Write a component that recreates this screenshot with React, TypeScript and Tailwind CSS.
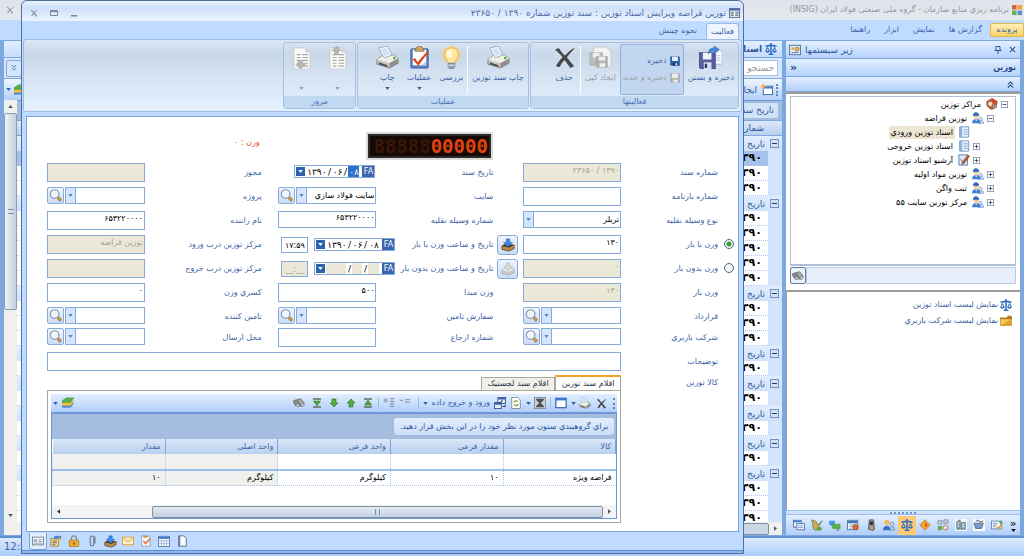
import { useState, type ReactNode } from "react"
import clsx from "clsx"

type IconProps = { className?: string; gray?: boolean }

/* ---------- Icons ---------- */

function PrinterIcon({ className = "size-6" }: IconProps) {
  return (
    <svg viewBox="0 0 24 24" className={className}>
      <path d="M3 2l9-2 5 10-9 3z" fill="#f7fbff" stroke="#8b9bb0" strokeWidth=".8" />
      <path d="M5 3l6-1.4 3.6 7-6 2z" fill="#cfe3fa" />
      <path d="M1 14l6-4 2 2.5 9-3.5 5 4v5l-9 5-13-4z" fill="#c9c8c4" stroke="#6f6f6d" strokeWidth=".8" />
      <path d="M1 14l13 3.8 9-4.8-5-3.6-9 3.1-2-2.4z" fill="#efeeea" />
      <path d="M14 18v5l9-5v-5z" fill="#8e8e8c" />
      <path d="M3 17l9 3v2l-9-3z" fill="#4a4a4a" />
      <circle cx="19" cy="12.6" r="1.4" fill="#34c02e" />
    </svg>
  )
}

function ClipboardIcon({ className = "size-6" }: IconProps) {
  return (
    <svg viewBox="0 0 24 24" className={className}>
      <rect x="3" y="3" width="18" height="20" rx="1" fill="#5f86c4" stroke="#35599c" />
      <path d="M5 4h14v16H5z" fill="#fff" />
      <path d="M14 20l5-4v4z" fill="#b9cdea" />
      <path d="M8 4c0-5 8-5 8 0l1 1.5H7z" fill="#c9a56a" stroke="#80622f" strokeWidth=".7" />
      <path d="M5 14l2.4-1.5L10 17 20 5.5l1.5 1L10.600 20.500z" fill="#e2440f" />
    </svg>
  )
}

function BulbIcon({ className = "size-6" }: IconProps) {
  return (
    <svg viewBox="0 0 24 24" className={className}>
      <ellipse cx="12" cy="9" rx="9.500" ry="9" fill="#ffc95a" opacity=".7" />
      <path d="M12 2c-5 0-7 3.500-7 7 0 4 3.500 5 3.500 9h7c0-4 3.500-5 3.500-9 0-3.500-2-7-7-7z" fill="#ffe9a6" stroke="#f0a83a" strokeWidth=".8" />
      <ellipse cx="10" cy="8" rx="3" ry="4" fill="#fff8de" />
      <path d="M8.500 18h7v3.500L13.500 24h-3l-2-2.500z" fill="#93a5bd" stroke="#61738d" strokeWidth=".7" />
      <path d="M8.500 20h7" stroke="#dfe8f4" />
    </svg>
  )
}

function FloppyIcon({ className = "size-3", gray }: IconProps) {
  return (
    <svg viewBox="0 0 24 24" className={className}>
      <path d="M1 2h21l1 1v20H3l-2-2z" fill={gray ? "#b3b3b3" : "#2b5fb5"} stroke={gray ? "#999" : "#173c80"} />
      <path d="M5 2h14v10H5z" fill={gray ? "#eee" : "#e7f1ff"} />
      <path d="M7 16h11v7H7z" fill={gray ? "#ddd" : "#16305f"} />
      <path d="M13 17.500h4V22h-4z" fill="#fff" />
    </svg>
  )
}

function SaveCloseIcon({ className = "size-6" }: IconProps) {
  return (
    <svg viewBox="0 0 24 24" className={className}>
      <path d="M12 3h9l3 3v13H12z" fill="#f7faff" stroke="#8fa9cd" strokeWidth=".8" />
      <path d="M14 10h8M14 12.500h8M14 15h8" stroke="#b7c9e4" />
      <path d="M0 7h16l1 1v16H2l-2-2z" fill="#5a5e9f" stroke="#3a3c78" strokeWidth=".8" />
      <path d="M4 7h9v7H4z" fill="#f0f2fb" />
      <path d="M5 17h8v7H5z" fill="#d9dcef" />
      <path d="M6 18.500h2.500V23H6z" fill="#34366e" />
      <path d="M10 8c0-5 3-6 6-6V0l5 4-5 4V5.500c-3 0-4 .5-6 2.500z" fill="#3f8be0" stroke="#1f5fae" strokeWidth=".6" />
    </svg>
  )
}

function CopyIcon({ className = "size-6" }: IconProps) {
  return (
    <svg viewBox="0 0 24 24" className={className}>
      <path d="M5 1h13l5 5v16H5z" fill="#f3f3f1" stroke="#c2c2c0" strokeWidth=".8" />
      <path d="M1 7h13v13H1z" fill="#bdbdbb" stroke="#a0a09e" strokeWidth=".7" />
      <path d="M4 7h7v5H4z" fill="#efefed" />
      <path d="M8 11h11v11H8z" fill="#b3b3b1" stroke="#999" strokeWidth=".7" />
      <path d="M10 11h7v4h-7zM11 18h6v4h-6z" fill="#eee" />
    </svg>
  )
}

function CrossIcon({ className = "size-6" }: IconProps) {
  return (
    <svg viewBox="0 0 24 24" className={className}>
      <path d="M2 4l4-2c2 3 4 6 6.500 8C16 6 19 3 23 2c-3 3-6 6-8.500 10 2.500 3 4.500 5.500 7.500 9l-4 2c-2-3.500-4-6-6-8.500-2.500 2.500-4 5-5 7.500l-4-1c1.500-3 4-6 7-9.500C7.500 9 5 6 2 4z" fill="currentColor" />
    </svg>
  )
}

function PageListIcon({ className = "size-6", up }: { className?: string; up?: boolean }) {
  return (
    <svg viewBox="0 0 24 24" className={className}>
      <path d="M4 2h12l5 5v17H4z" fill="#fafafa" stroke="#bdbdbd" strokeWidth=".8" />
      <path d="M16 2l5 5h-5z" fill="#d6d6d6" />
      <path d="M7 9h4M13 9h6M7 12h4M13 12h6M7 15h4M13 15h6M7 18h4M13 18h6M7 21h4M13 21h6" stroke="#a9a9a9" strokeWidth="1.300" />
      <path d={up ? "M9 9V5H6l5-5 5 5h-3v4z" : "M9 15v4H6l5 5 5-5h-3v-4z"} fill="#b9b9b9" stroke="#999" strokeWidth=".6" />
    </svg>
  )
}

function ScalesIcon({ className = "size-3" }: IconProps) {
  return (
    <svg viewBox="0 0 24 24" className={className} fill="#2f6cc0">
      <path d="M10.500 0h3v3l9.500 2v3l-9.500-1.500V20l4.500 4H6l4.500-4V6.500L1 8V5l9.500-2z" />
      <path d="M5 7l4.500 9c-1 4.500-8 4.500-9 0zm0 4l-2 5h4zM19 7l4.500 9c-1 4.500-8 4.500-9 0zm0 4l-2 5h4z" fillRule="evenodd" />
    </svg>
  )
}

function FormIcon({ className = "size-3" }: IconProps) {
  return (
    <svg viewBox="0 0 14 12" className={className}>
      <rect x=".5" y=".5" width="13" height="11" fill="#eef4fc" stroke="#3e4d66" />
      <path d="M0 0h14v3H0z" fill="#4f6fa5" />
      <path d="M2 5h4M2 7h4M2 9h4M8 5h4M8 7h4M8 9h4" stroke="#3d4c60" />
    </svg>
  )
}

function CalendarGridIcon({ className = "size-3" }: IconProps) {
  return (
    <svg viewBox="0 0 14 14" className={className}>
      <rect x=".5" y="1.500" width="13" height="12" fill="#fff" stroke="#5676a8" />
      <path d="M1 2h12v2.500H1z" fill="#3f78cf" />
      <path d="M1 7h12M1 10h12M4 5v8M7 5v8M10 5v8" stroke="#9db4d6" />
    </svg>
  )
}

function MagnifierIcon({ className = "size-3" }: IconProps) {
  return (
    <svg viewBox="0 0 14 14" className={className}>
      <path d="M8.500 9.500l2-1.500 3 3.500-2 2z" fill="#d79a35" stroke="#7d6130" strokeWidth=".7" />
      <circle cx="6" cy="5.500" r="4.700" fill="#eef5fd" stroke="#8e99a8" strokeWidth="1.300" />
      <path d="M3.500 5c.3-1.500 1.500-2.300 3-2.200" stroke="#fff" fill="none" />
    </svg>
  )
}

function InboxIcon({ className = "size-4", gray }: IconProps) {
  return (
    <svg viewBox="0 0 16 16" className={className}>
      <path d="M1 9l4-2 10 1v4l-6 3-8-2z" fill={gray ? "#c9c9c9" : "#b98a45"} stroke={gray ? "#a9a9a9" : "#4b3a20"} strokeWidth=".8" />
      <path d="M1 9l4-2 10 1-6 3z" fill={gray ? "#ededed" : "#4a4032"} />
      <path d="M6 1h4v4h3L8 10 3 5h3z" fill={gray ? "#d9d9d9" : "#3c8ae8"} stroke={gray ? "#b0b0b0" : "#1f5cae"} strokeWidth=".6" />
    </svg>
  )
}

function PeopleIcon({ className = "size-3" }: IconProps) {
  return (
    <svg viewBox="0 0 14 14" className={className}>
      <circle cx="10" cy="8" r="2" fill="#d8e6f7" stroke="#6b8fc2" strokeWidth=".7" />
      <path d="M7.500 14c0-5 6.500-5 6.500-1z" fill="#c5daf3" stroke="#6b8fc2" strokeWidth=".7" />
      <path d="M0 13C0 6 10 6 10 13z" fill="#3c7fdc" />
      <circle cx="5" cy="5" r="2.800" fill="#f3c889" />
      <path d="M1 4.500c0-5.500 7-5.500 7.500 0z" fill="#2a66c6" />
      <path d="M3.500 8.500L5 11l1.500-2.500z" fill="#ffe27a" />
    </svg>
  )
}

function BookIcon({ className = "size-3" }: IconProps) {
  return (
    <svg viewBox="0 0 14 14" className={className}>
      <path d="M2 1h10.500v12H2z" fill="#f2f7fd" stroke="#5f8bc6" />
      <path d="M2 1h3v12H2z" fill="#8fb2e0" />
      <path d="M6.500 4h5M6.500 6h5M6.500 8h5M6.500 10h5" stroke="#8fb0dc" />
    </svg>
  )
}

function ArchiveIcon({ className = "size-3" }: IconProps) {
  return (
    <svg viewBox="0 0 14 14" className={className}>
      <path d="M1 1h10v12H1z" fill="#d8e8fa" stroke="#4674b4" />
      <path d="M3 6l3 4" stroke="#35599c" />
      <path d="M5 10L11.500 1l2 1.500L7 11l-2.500 1z" fill="#e2581c" stroke="#6a2a10" strokeWidth=".6" />
    </svg>
  )
}

function RootIcon({ className = "size-3" }: IconProps) {
  return (
    <svg viewBox="0 0 14 14" className={className}>
      <path d="M1 4l6-3.500L13 4l-1 7-6 2.500L1 9z" fill="#c4622d" stroke="#63301a" strokeWidth=".7" />
      <path d="M7 .5L13 4 8 6.500z" fill="#e33b1b" />
      <circle cx="5" cy="7" r="2.500" fill="#f2ddc0" />
      <path d="M8 8h4v3l-3 1.500z" fill="#8b98a8" />
    </svg>
  )
}

function StackIcon({ className = "size-3" }: IconProps) {
  return (
    <svg viewBox="0 0 14 12" className={className}>
      <path d="M0 9l4-3h10l-4 5.500H0z" fill="#4f8fe0" />
      <path d="M0 6.500L4 4h10l-4 5H0z" fill="#f6c33b" stroke="#c98d17" strokeWidth=".4" />
      <path d="M0 3.500L5 0h9l-4 5.500H0z" fill="#56b04a" stroke="#3a8131" strokeWidth=".4" />
    </svg>
  )
}

function BinocularsIcon({ className = "size-3" }: IconProps) {
  return (
    <svg viewBox="0 0 14 12" className={className}>
      <path d="M0 4l4-2 5 5-2 3-4-1z" fill="#8c8c8c" stroke="#4f4f4f" strokeWidth=".7" />
      <path d="M5 2l4-1 4 5-1 3-3 1z" fill="#a9a9a9" stroke="#4f4f4f" strokeWidth=".7" />
      <circle cx="5.500" cy="8.500" r="1.800" fill="#c9dcf2" stroke="#555" strokeWidth=".6" />
      <circle cx="11.200" cy="8" r="1.800" fill="#c9dcf2" stroke="#555" strokeWidth=".6" />
    </svg>
  )
}

function FolderIcon({ className = "size-3" }: IconProps) {
  return (
    <svg viewBox="0 0 14 12" className={className}>
      <path d="M0 2h8l1-2h4l1 2v9.500H0z" fill="#b47b1d" />
      <path d="M.5 4h13v7H.5z" fill="#f6c95a" />
      <path d="M.5 11L13.500 4v7z" fill="#e2a02c" />
    </svg>
  )
}

function ToolArrowIcon({ up, bar, className = "size-2.5" }: { up?: boolean; bar?: boolean; className?: string }) {
  return (
    <svg viewBox="0 0 10 10" className={className}>
      {bar && <path d="M1 1h8M1 9h8" stroke="#5d6b5e" strokeWidth="1.300" />}
      {bar ? (
        <path d={up ? "M5 2l3.500 5h-7z" : "M5 8L1.500 3h7z"} fill="#4ea63c" stroke="#2f6b26" strokeWidth=".5" />
      ) : (
        <path d={up ? "M5 1l4 4H7v4H3V5H1z" : "M5 9L1 5h2V1h4v4h2z"} fill="#52ad3e" stroke="#2f6b26" strokeWidth=".6" />
      )}
    </svg>
  )
}

function Glyph({ name, className = "size-3" }: { name: string; className?: string }) {
  return (
    <svg viewBox="0 0 14 14" className={className}>
      {name === "windows" && (
        <>
          <rect x=".5" y="1.500" width="9" height="8" fill="#e9f2fd" stroke="#42699f" />
          <path d="M1 2h8v2H1z" fill="#4b82ce" />
          <rect x="4.500" y="5.500" width="9" height="7" fill="#fff" stroke="#42699f" />
          <path d="M6 8h6M6 10h6" stroke="#6a92c9" />
        </>
      )}
      {name === "brush" && (
        <>
          <path d="M1 1l5 2 2 4 5-5-4 7-3 4-3-1z" fill="#d7a861" stroke="#4c7b3c" strokeWidth=".8" />
          <path d="M8 9l5 1-1 3-5 1z" fill="#58a848" />
        </>
      )}
      {name === "chat" && (
        <>
          <path d="M0 2h7v5H4L2 9V7H0z" fill="#4b9ae6" />
          <path d="M4 6h9v5h-2v3l-3-3H4z" fill="#57b347" stroke="#3b8230" strokeWidth=".5" />
        </>
      )}
      {name === "schedule" && (
        <>
          <rect x=".5" y="1.500" width="12" height="11" fill="#f4f8fd" stroke="#50719f" />
          <path d="M1 2h11v3H1z" fill="#4476bd" />
          <path d="M3 7h7M3 9h5M3 11h3" stroke="#8ba2c2" />
          <circle cx="10" cy="9.500" r="3.200" fill="#e06b35" stroke="#8d3a17" strokeWidth=".6" />
        </>
      )}
      {name === "safe" && (
        <>
          <path d="M5 1h5l1 11-2 1.500-5-1.500z" fill="#8c8c8c" stroke="#444" strokeWidth=".8" />
          <circle cx="7.500" cy="5" r="2" fill="#2e2e2e" />
          <path d="M6 9h3v3H6z" fill="#d9a640" />
        </>
      )}
      {name === "users" && (
        <>
          <circle cx="4.500" cy="4" r="3" fill="#f0bd55" />
          <path d="M0 13c0-7 9-7 9 0z" fill="#356fc9" />
          <circle cx="10.500" cy="6" r="2.300" fill="#cfd9e8" stroke="#5c7396" strokeWidth=".7" />
          <path d="M8 13c0-5 6-5 6 0z" fill="#b5c6de" stroke="#5c7396" strokeWidth=".6" />
        </>
      )}
      {name === "diamond" && (
        <>
          <path d="M7 1l6 6-6 6-6-6z" fill="#f2a533" stroke="#c06a14" strokeWidth=".8" />
          <path d="M7 4l3 3-3 3z" fill="#d9482b" />
        </>
      )}
      {name === "blocks" && (
        <>
          <path d="M1 2h5v4H1zM8 1h5v4H8z" fill="#c8d1dc" stroke="#66758a" strokeWidth=".7" />
          <path d="M1 8h5v5H1z" fill="#5fb04e" />
          <circle cx="10" cy="10" r="2.700" fill="#e3e8ef" stroke="#c05a3c" strokeWidth=".9" />
        </>
      )}
      {name === "building" && (
        <>
          <path d="M0 0h14v14H0z" fill="#f8fafc" />
          <path d="M2 3l4-2v11H2zM7 4h5v8H7z" fill="#8aa5c8" stroke="#476d53" strokeWidth=".8" />
          <path d="M3 5h2M3 8h2M8 6h3M8 9h3" stroke="#fff" />
        </>
      )}
      {name === "cart" && (
        <>
          <path d="M0 0h14v14H0z" fill="#f8fafc" />
          <path d="M1 5h11l-2 6H3zM3 3l3-2 2 3 4-2" fill="#7e9cc8" stroke="#3d5f93" strokeWidth=".9" />
          <path d="M9 2l3 2-3 2z" fill="#e0a337" />
        </>
      )}
      {name === "report" && (
        <>
          <rect x=".5" y="2.500" width="12" height="9" fill="#fff" stroke="#5b7fb3" />
          <path d="M2 5h6M2 7h5M2 9h4" stroke="#6a92c9" />
          <path d="M7 9l2 2 4-6" stroke="#e09a1d" strokeWidth="1.800" fill="none" />
          <circle cx="11.500" cy="4" r="1.800" fill="#58a848" />
        </>
      )}
      {name === "card" && (
        <>
          <rect x=".5" y="2.500" width="13" height="9" fill="#f3f6fa" stroke="#6d7b8e" />
          <path d="M2 5h4v3H2z" fill="#9aabc2" />
          <path d="M7.500 5.500h4M7.500 7.500h4M2 9.500h10" stroke="#8795a9" />
        </>
      )}
      {name === "props" && (
        <>
          <path d="M1 4h9v9H1z" fill="#f0d79c" stroke="#8a6a2c" strokeWidth=".8" />
          <path d="M5 1h8v4H5z" fill="#4d83cf" />
          <path d="M10 2l3 3-4 2z" fill="#f1ab2b" />
          <path d="M3 7h5M3 9h5M3 11h3" stroke="#6d5a33" />
        </>
      )}
      {name === "lock" && (
        <>
          <path d="M4 7V4c0-4 6-4 6 0v3" fill="none" stroke="#8d8d8d" strokeWidth="1.500" />
          <rect x="1.500" y="6" width="11" height="7.500" rx="1" fill="#f1ab2b" stroke="#a86b12" strokeWidth=".8" />
          <path d="M7 8.500v3" stroke="#6b420a" strokeWidth="1.400" />
        </>
      )}
      {name === "clip" && (
        <path d="M9 3v7.500c0 3-4 3-4 0V3.500c0-3 5.500-3 5.500 0V10" fill="none" stroke="#71839c" strokeWidth="1.400" />
      )}
      {name === "mail" && (
        <>
          <rect x=".5" y="2.500" width="13" height="9" fill="#fbeec5" stroke="#d79b37" />
          <path d="M1 3l6 5 6-5" fill="none" stroke="#d79b37" />
        </>
      )}
      {name === "check" && (
        <>
          <path d="M2 1h9l1 12H2z" fill="#f5f7fb" stroke="#7a8ca8" strokeWidth=".8" />
          <path d="M4 1h5v2H4z" fill="#c58b3b" />
          <path d="M4 7l2.500 3L12 4" fill="none" stroke="#e06a25" strokeWidth="1.600" />
        </>
      )}
      {name === "page" && (
        <>
          <path d="M3 1h6l3 3v9H3z" fill="#fbfcfe" stroke="#4e6384" />
          <path d="M3 1h2v12H3z" fill="#6d84aa" />
        </>
      )}
      {name === "window" && (
        <>
          <rect x="1" y="1.500" width="12" height="11" fill="#fff" stroke="#2d64b5" strokeWidth="1.400" />
          <path d="M1 1.500h12V4H1z" fill="#3a79d2" />
        </>
      )}
      {name === "sum" && (
        <>
          <rect x=".5" y=".5" width="13" height="13" fill="#cdd0d4" stroke="#808791" />
          <path d="M2.500 2h9v1.500L8 7l3.500 3.500V12h-9v-1.500L6 7 2.500 3.500z" fill="#4a525c" />
        </>
      )}
      {name === "refresh" && (
        <>
          <path d="M2 .5h7l3 3v10H2z" fill="#fdfdfb" stroke="#7b8188" />
          <path d="M4.500 6.500C5 4 8 4 9 5.500M9.500 8c-.5 2.500-3.500 2.500-4.500 1" fill="none" stroke="#6da43a" strokeWidth="1.500" />
        </>
      )}
      {name === "export" && (
        <>
          <rect x="4.500" y=".5" width="9" height="7" fill="#e6edf8" stroke="#33527f" />
          <path d="M5 1h8v2H5z" fill="#3e66a6" />
          <rect x=".5" y="6.500" width="8" height="7" fill="#e6edf8" stroke="#33527f" />
          <path d="M1 7h7v2H1z" fill="#3e66a6" />
          <path d="M6 8l4-4M10 11h3V9" stroke="#27406a" strokeWidth="1.200" fill="none" />
        </>
      )}
      {name === "tree" && (
        <>
          <circle cx="3" cy="4" r="2.500" fill="#a3abb8" />
          <path d="M8 2h5M8 5h5M8 8h5M8 11h5" stroke="#8a94a3" strokeWidth="1.400" />
        </>
      )}
      {name === "rows" && <path d="M1 4h4M7 3h6M7 6h6" stroke="#97a1af" strokeWidth="1.400" />}
      {name === "new" && (
        <>
          <rect x="3.500" y="3.500" width="10" height="9" fill="#fff" stroke="#3d68a6" />
          <path d="M4 4h9v2H4z" fill="#4b82ce" />
          <path d="M3.500 0l1 2.500L7 3.500 4.500 4.500l-1 2.500-1-2.500L0 3.500l2.500-1z" fill="#f5b22d" />
        </>
      )}
      {name === "subsys" && (
        <>
          <rect x=".5" y="1.500" width="13" height="11" fill="#dfeaf8" stroke="#49668f" />
          <path d="M3 4h3v3H3z" fill="#e7a733" />
          <circle cx="9.500" cy="6" r="2.300" fill="#e9c25b" stroke="#72592a" strokeWidth=".7" />
          <path d="M3 10h8" stroke="#49668f" />
        </>
      )}
    </svg>
  )
}

function Caret({ className = "text-[#2f5ea8]" }: { className?: string }) {
  return (
    <svg viewBox="0 0 6 4" className={clsx("h-[3px] w-[5px] shrink-0", className)}>
      <path d="M0 0h6L3 4z" fill="currentColor" />
    </svg>
  )
}

/* ---------- Form controls ---------- */

const frame = "border border-[#86aadb] bg-white"

function Field({ id, value = "", disabled, short }: { id: string; value?: string; disabled?: boolean; short?: boolean }) {
  return (
    <input
      id={id}
      defaultValue={value}
      disabled={disabled}
      className={clsx(
        "w-full border border-[#86aadb] px-px pb-1 outline-none",
        short ? "h-[17px]" : "h-[19px]",
        disabled ? "bg-[#ebe8d8] text-[#a5a394]" : "bg-white text-black",
      )}
    />
  )
}

function Combo({ id, value = "", lookup = true }: { id: string; value?: string; lookup?: boolean }) {
  return (
    <div className="flex h-[17px] w-full gap-px">
      <div className={clsx("flex min-w-0 flex-1", frame)}>
        <select id={id} defaultValue={value} className="min-w-0 flex-1 appearance-none px-px text-black outline-none">
          <option value={value}>{value}</option>
        </select>
        <span className="flex w-[10px] shrink-0 items-center justify-center border-r border-[#86aadb] bg-[#d5e5fb]">
          <Caret className="text-[#5d87c4]" />
        </span>
      </div>
      {lookup && (
        <button
          type="button"
          aria-label="جستجو"
          className="flex w-[17px] shrink-0 items-center justify-center rounded-[2px] border border-[#86aadb] bg-linear-to-b from-[#f2f7fe] to-[#c9dcf6]"
        >
          <MagnifierIcon className="size-[13px]" />
        </button>
      )}
    </div>
  )
}

function DateField({ id, parts, disabled, active }: { id: string; parts: string[]; disabled?: boolean; active?: boolean }) {
  const cell = disabled ? "bg-[#ebe8d8]" : "bg-white"
  return (
    <div dir="ltr" className={clsx("flex h-[13px] w-[81px] shrink-0 items-stretch text-[9px]", frame)}>
      <button type="button" disabled={disabled} aria-label="تقویم" className="m-px flex w-[9px] items-center justify-center bg-[#2d62ad]">
        <Caret className="text-white" />
      </button>
      <input id={id} defaultValue={parts[0]} disabled={disabled} className={clsx("w-[20px] text-right outline-none", cell)} />
      <span className="w-[6px] text-center text-black">/</span>
      <input aria-label="ماه" defaultValue={parts[1]} disabled={disabled} className={clsx("w-[10px] text-right outline-none", cell)} />
      <span className="w-[6px] text-center text-black">/</span>
      <input
        aria-label="روز"
        defaultValue={parts[2]}
        disabled={disabled}
        className={clsx("w-[11px] text-center outline-none", active ? "bg-[#2f6fd0] text-white" : cell)}
      />
      <span className="ml-auto flex w-[12px] items-center justify-center bg-[#3a66ad] text-[8px] text-white">FA</span>
    </div>
  )
}

function FormLabel({ htmlFor, children }: { htmlFor: string; children: ReactNode }) {
  return (
    <label htmlFor={htmlFor} className="flex h-[19px] items-center whitespace-nowrap text-[#3c64a8]">
      {children}
    </label>
  )
}

/* ---------- Back window ---------- */

const menu = ["گزارش ها", "نمایش", "ابزار", "راهنما"]

// Number of documents listed below every date group
const groups = [3, 5, 3, 1, 1, 1, 1, 3]

const tree = [
  { label: "مراکز توزین", level: 0, icon: <RootIcon />, sign: "-" },
  { label: "توزین قراضه", level: 1, icon: <PeopleIcon />, sign: "-" },
  { label: "اسناد توزین ورودي", level: 2, icon: <BookIcon />, sign: "", selected: true },
  { label: "اسناد توزین خروجی", level: 2, icon: <BookIcon />, sign: "+" },
  { label: "آرشیو اسناد توزین", level: 2, icon: <ArchiveIcon />, sign: "+" },
  { label: "توزین مواد اولیه", level: 1, icon: <PeopleIcon />, sign: "+" },
  { label: "ثبت واگن", level: 1, icon: <PeopleIcon />, sign: "+" },
  { label: "مرکز توزین سایت ۵۵", level: 1, icon: <PeopleIcon />, sign: "+" },
]

function Expander({ sign, large }: { sign: string; large?: boolean }) {
  return (
    <svg viewBox="0 0 9 9" className={large ? "size-[9px] shrink-0" : "size-[7px] shrink-0"}>
      <rect x=".5" y=".5" width="8" height="8" fill={large ? "#cfe0f7" : "#fff"} stroke={large ? "#6f93c8" : "#7d8fa9"} />
      <path d={sign === "+" ? "M2 4.500h5M4.500 2v5" : "M2 4.500h5"} stroke="#24395c" />
    </svg>
  )
}

function TopBars() {
  return (
    <header>
      <div className="flex h-[20px] items-center gap-[3px] bg-linear-to-b from-[#dfe3ea] to-[#e6e9ee] pr-px pl-1.5 text-[#8e97a4]">
        <svg viewBox="0 0 12 12" className="size-[11px] shrink-0">
          <path d="M0 0h5v5H0z" fill="#d9643c" />
          <path d="M6 0h5v5H6z" fill="#f0a23a" />
          <path d="M0 6h5v5H0z" fill="#6bb04e" />
          <path d="M6 6h5v5H6z" fill="#5b8ad6" />
        </svg>
        <h1 className="whitespace-nowrap">برنامه ریزي منابع سازمان - گروه ملی صنعتی فولاد ایران (INSIG)</h1>
        <button type="button" aria-label="بستن" className="mr-auto">
          <CrossIcon className="size-2" />
        </button>
      </div>
      <nav className="flex h-[20px] items-center bg-[#bfdbff] text-[#3c64a8]">
        <button type="button" className="h-[14px] w-[34px] rounded-t-[2px] border border-[#e0b450] bg-linear-to-b from-[#fff0b8] to-[#fbd261]">
          پرونده
        </button>
        <div className="mr-[8px] flex gap-[14px]">
          {menu.map((item) => (
            <button key={item} type="button" className="whitespace-nowrap">
              {item}
            </button>
          ))}
        </div>
      </nav>
    </header>
  )
}

function SidePanel() {
  return (
    <aside className="flex w-[234px] shrink-0 flex-col bg-white">
      <div className="flex h-[17px] shrink-0 items-center bg-linear-to-b from-[#e3efff] to-[#b5d2fb] px-[3px] text-[9px] text-[#2f5797]">
        <button type="button" aria-label="بستن" className="flex w-[9px] justify-center">
          <svg viewBox="0 0 8 8" className="size-[7px]">
            <path d="M1 1l6 6M7 1L1 7" stroke="currentColor" strokeWidth="1.300" />
          </svg>
        </button>
        <button type="button" aria-label="سنجاق" className="mr-[6px] flex w-[9px] justify-center">
          <svg viewBox="0 0 8 8" className="size-[8px]" fill="none" stroke="currentColor">
            <path d="M2 .5h4v4H2zM.5 4.500h7M4 5v3" />
          </svg>
        </button>
        <h2 className="mr-auto ml-[4px]">زیر سیستمها</h2>
        <Glyph name="subsys" />
      </div>
      <div className="flex h-[18px] shrink-0 items-center justify-between border-t border-[#7ea6de] bg-linear-to-b from-[#e3efff] to-[#b5d2fb] px-[4px] font-bold text-[#1f4384]">
        <span>توزین</span>
        <span className="text-[11px]">«</span>
      </div>
      <div className="flex h-[16px] shrink-0 items-center border-y border-[#7ea6de] bg-linear-to-b from-[#e3efff] to-[#b5d2fb] px-[6px] text-[#1f4384]">
        <svg viewBox="0 0 8 8" className="size-[7px]" fill="none" stroke="currentColor" strokeWidth="1.200">
          <path d="M1 4l3-3 3 3M1 7.500l3-3 3 3" />
        </svg>
      </div>
      <div className="flex h-[194px] shrink-0 flex-col border-t-2 border-[#9c9c98] pt-[2px] pr-[4px] pl-[4px]">
        <ul className="flex-1 border border-b-2 border-[#aebfd6] pr-[7px] text-black">
          {tree.map((node) => (
            <li
              key={node.label}
              className={clsx("flex h-[14px] items-center gap-[3px]", node.level === 1 && "pr-[14px]", node.level === 2 && "pr-[28px]")}
            >
              {node.sign ? <Expander sign={node.sign} /> : <span className="w-[7px]" />}
              {node.icon}
              <span className={clsx("px-[2px] leading-[13px] whitespace-nowrap", node.selected && "bg-[#ebe5d2]")}>{node.label}</span>
            </li>
          ))}
        </ul>
        <div className="flex h-[20px] items-center pb-px" dir="ltr">
          <button type="button" aria-label="یافتن" className="flex h-[17px] w-[16px] items-center justify-center rounded-[2px] border border-[#5f7ea9] bg-[#edf2f9]">
            <BinocularsIcon />
          </button>
          <div className="h-[17px] flex-1 border border-[#b7cbe6] bg-[#e9f0fb]" />
        </div>
      </div>
      <div className="h-[4px] shrink-0" />
      <div className="min-h-0 flex-1 border-t-2 border-l border-[#9c9c98] px-[8px] pt-[5px]">
        {["نمایش لیست اسناد توزین", "نمایش لیست شرکت باربري"].map((text, i) => (
          <a key={text} href="#" className="flex h-[16px] items-center gap-[2px] whitespace-nowrap text-[#3c64a8]">
            {i === 0 ? <ScalesIcon /> : <FolderIcon />}
            {text}
          </a>
        ))}
      </div>
      <div className="flex h-[5px] shrink-0 items-center justify-center border-y border-[#9dbfee] bg-[#cfe1fb]">
        <span className="h-[2px] w-[26px] border-t-2 border-dotted border-[#6d94cc]" />
      </div>
      <div className="flex h-[20px] shrink-0 items-center bg-linear-to-b from-[#e3efff] to-[#b0cef9]">
        <button type="button" aria-label="بیشتر" dir="ltr" className="flex w-[14px] flex-col items-center text-[11px] leading-[10px] text-black">
          »
          <Caret className="text-black" />
        </button>
        {["report", "cart", "building", "blocks", "diamond", "scales", "users", "safe", "schedule", "chat", "brush", "windows"].map((name) => (
          <button
            key={name}
            type="button"
            aria-label={name}
            className={clsx("flex h-[19px] w-[18px] items-center justify-center", name === "scales" && "bg-[#ffca75]")}
          >
            {name === "scales" ? <ScalesIcon /> : <Glyph name={name} />}
          </button>
        ))}
      </div>
    </aside>
  )
}

function DocumentList() {
  return (
    <section className="flex min-w-0 flex-1 flex-col bg-white text-[9px]">
      <div className="flex h-[16px] shrink-0 items-center gap-[3px] bg-linear-to-b from-[#e3efff] to-[#c5dcfb] pr-[5px] font-bold text-[#2f5797]">
        <ScalesIcon />
        اسناد توزین
      </div>
      <div className="flex h-[22px] shrink-0 items-center gap-1 border-y border-[#7ea6de] bg-[#d6e6fc] pr-[4px] pl-[2px]">
        <input aria-label="جستجو" placeholder="جستجو ..." className="h-[16px] flex-1 border border-[#a9c2e3] bg-white px-[3px] outline-none placeholder:text-[#9a9a9a]" />
        <button type="button" aria-label="نمایش بیشتر" className="flex h-[17px] w-[16px] items-center justify-center rounded-[2px] border border-[#86aadb] text-[#2f5ea8]">
          <svg viewBox="0 0 8 8" className="size-[6px]" fill="none" stroke="currentColor">
            <path d="M1 0l3 3 3-3M1 4l3 3 3-3" />
          </svg>
        </button>
      </div>
      <div className="flex h-[21px] shrink-0 items-center gap-[3px] bg-linear-to-b from-[#f0f6ff] to-[#b3d0f8] pr-[4px] pl-[2px] text-[#2f5797]">
        <span className="h-[12px] border-l-2 border-dotted border-[#5c86c4]" />
        <Glyph name="new" className="size-[13px]" />
        <span>ایجاد</span>
        <span className="mr-auto">
          <StackIcon />
        </span>
        <Caret />
      </div>
      <div className="flex min-h-0 flex-1">
        <div className="flex min-w-0 flex-1 flex-col">
          <div className="flex h-[20px] shrink-0 items-center border-t border-[#6a97d8] bg-[#a4bddf] pr-[4px]">
            <span className="h-[15px] rounded-[2px] bg-[#d3e3f8] px-[4px] leading-[15px] text-[#2f5797]">تاریخ سند</span>
          </div>
          <div className="h-[16px] shrink-0 border-y border-[#7ea6de] bg-linear-to-b from-[#dbe8f8] to-[#b9d0ee] pr-[18px] leading-[14px] text-[#2f5797]">شماره</div>
          <div className="min-h-0 flex-1 overflow-hidden bg-[#d3e4fc]">
            {groups.map((count, g) => (
              <div key={g}>
                <div className="flex h-[15px] items-center gap-[5px] bg-linear-to-b from-[#e2eefe] to-[#cfe1fb] pr-[3px] text-[#2f5797]">
                  <Expander sign="-" large />
                  تاریخ سند
                </div>
                {Array.from({ length: count }, (_, i) => (
                  <div
                    key={i}
                    className={clsx(
                      "mr-[14px] h-[15px] border-b border-dotted border-[#a9c6ee] pr-[6px] text-[11px] leading-[14px] font-bold text-black",
                      g === 0 && i === 0 ? "bg-[#a6c2ea]" : "bg-white",
                    )}
                  >
                    ۱۳۹۰
                  </div>
                ))}
              </div>
            ))}
          </div>
        </div>
        <div className="flex w-[13px] shrink-0 flex-col bg-[#f0f0ee]">
          <span className="flex h-[13px] items-center justify-center">
            <Caret className="rotate-180 text-[#44556f]" />
          </span>
          <span className="flex h-[197px] items-center justify-center rounded-[2px] border border-[#8d9ab0] bg-linear-to-l from-[#c3cedd] to-[#eef2f7]">
            <span className="h-[5px] w-[6px] border-y border-[#7f8fa9]" />
          </span>
          <span className="mt-auto flex h-[13px] items-center justify-center">
            <Caret className="text-[#44556f]" />
          </span>
        </div>
      </div>
      <div className="flex h-[13px] shrink-0 items-center bg-[#f0f0ee]">
        <span className="flex w-[13px] justify-center">
          <Caret className="-rotate-90 text-[#44556f]" />
        </span>
        <span className="h-[12px] w-1/2 rounded-[2px] border border-[#7f8fa9] bg-[#ccd7e5]" />
      </div>
    </section>
  )
}

/* ---------- Dialog ---------- */

function BigButton({ icon, label, muted, caret, onClick }: { icon: ReactNode; label?: string; muted?: boolean; caret?: boolean; onClick?: () => void }) {
  return (
    <button
      type="button"
      disabled={muted}
      onClick={onClick}
      className={clsx("flex h-full flex-col items-center px-[4px] pt-[3px] whitespace-nowrap", muted ? "text-[#9a9fa8]" : "text-[#3c64a8]")}
    >
      {icon}
      <span className="mt-[2px] h-[13px] leading-[13px]">{label}</span>
      {caret && <Caret className={clsx("mt-[3px]", muted ? "text-[#9a9fa8]" : "text-[#2f5ea8]")} />}
    </button>
  )
}

function RibbonGroup({ title, className, children }: { title: string; className: string; children: ReactNode }) {
  return (
    <div className={clsx("flex flex-col overflow-hidden rounded-[3px] border border-[#a5c0e2]", className)}>
      <div className="flex min-h-0 flex-1">{children}</div>
      <div className="h-[12px] bg-[#c1d8f1] text-center leading-[12px] text-[#4a72b2]">{title}</div>
    </div>
  )
}

const Divider = () => <span className="my-[3px] border-l border-white" />

function Ribbon() {
  return (
    <div className="mx-px flex h-[73px] shrink-0 gap-px rounded-[3px] border border-[#9dbce4] bg-linear-to-b from-[#dbe6f3] via-[#c9d9ea] via-20% to-[#e6f1ff] p-[2px]">
      <RibbonGroup title="فعالیتها" className="w-[209px]">
        <BigButton icon={<SaveCloseIcon className="size-[23px]" />} label="ذخیره و بستن" />
        <div className="my-px flex w-[64px] flex-col justify-center gap-[2px] rounded-[2px] border border-[#93b2dd] bg-[#c2d6ef] px-[3px]">
          <button type="button" className="flex h-[15px] items-center gap-[3px] whitespace-nowrap text-[#3c64a8]">
            <FloppyIcon className="size-[10px] shrink-0" />
            ذخیره
          </button>
          <button type="button" disabled className="flex h-[15px] items-center gap-[3px] whitespace-nowrap text-[#9a9fa8]">
            <FloppyIcon gray className="size-[10px] shrink-0" />
            ذخیره و جدید
          </button>
        </div>
        <BigButton icon={<CopyIcon className="size-[23px]" />} label="ایجاد کپی" muted />
        <Divider />
        <BigButton icon={<CrossIcon className="size-[23px] text-[#474747]" />} label="حذف" />
      </RibbonGroup>
      <RibbonGroup title="عملیات" className="w-[172px]">
        <BigButton icon={<PrinterIcon className="size-[23px]" />} label="چاپ سند توزین" />
        <Divider />
        <BigButton icon={<BulbIcon className="size-[23px]" />} label="بررسی" />
        <BigButton icon={<ClipboardIcon className="size-[23px]" />} label="عملیات" caret />
        <BigButton icon={<PrinterIcon className="size-[23px]" />} label="چاپ" caret />
      </RibbonGroup>
      <RibbonGroup title="مرور" className="w-[73px]">
        <div className="flex flex-1 justify-around">
          <BigButton icon={<PageListIcon className="size-[23px]" up />} muted caret />
          <BigButton icon={<PageListIcon className="size-[23px]" />} muted caret />
        </div>
      </RibbonGroup>
    </div>
  )
}

function LedDisplay() {
  return (
    <div dir="ltr" className="border-2 border-[#dcdcd6] bg-[#2b2b2b] p-[2px]">
      <div className="flex h-[20px] items-center bg-[#160803] px-[3px] font-['DejaVu_Sans_Mono',monospace] text-[19px] leading-[20px] font-bold">
        <span className="text-[#3a1508]">88888</span>
        <span className="text-[#e0440e]">00000</span>
      </div>
    </div>
  )
}

function WeighingForm() {
  const [mode, setMode] = useState("loaded")
  return (
    <div className="grid grid-cols-[16px_97fr_98fr_30px_98fr_118fr_16px_117fr_98fr] grid-rows-[24px_24px_24px_24px_24px_24px_21px_24px_23px] items-start">
      <span />
      <FormLabel htmlFor="docNo">شماره سند</FormLabel>
      <Field id="docNo" value="۱۳۹۰ / ۲۳۶۵۰" disabled />
      <span />
      <FormLabel htmlFor="docDate">تاریخ سند</FormLabel>
      <div className="pt-[2px] pr-[20px]">
        <DateField id="docDate" parts={["۱۳۹۰", "۰۶", "۰۸"]} active />
      </div>
      <span />
      <FormLabel htmlFor="permit">مجوز</FormLabel>
      <Field id="permit" disabled />

      <span />
      <FormLabel htmlFor="waybill">شماره بارنامه</FormLabel>
      <Field id="waybill" />
      <span />
      <FormLabel htmlFor="site">سایت</FormLabel>
      <div className="pr-[19px]">
        <Combo id="site" value="سایت فولاد سازي" />
      </div>
      <span />
      <FormLabel htmlFor="project">پروژه</FormLabel>
      <Combo id="project" />

      <span />
      <FormLabel htmlFor="vehicleType">نوع وسیله نقلیه</FormLabel>
      <Combo id="vehicleType" value="تریلر" lookup={false} />
      <span />
      <FormLabel htmlFor="vehicleNo">شماره وسیله نقلیه</FormLabel>
      <div className="pr-[19px]">
        <Field id="vehicleNo" value="۶۵۳۲۲۰۰۰۰" short />
      </div>
      <span />
      <FormLabel htmlFor="driver">نام راننده</FormLabel>
      <Field id="driver" value="۶۵۳۲۲۰۰۰۰" />

      <Radio id="loaded" checked={mode === "loaded"} onChange={setMode} />
      <FormLabel htmlFor="loaded">وزن با بار</FormLabel>
      <Field id="loadedWeight" value="۱۳۰" />
      <InboxButton />
      <FormLabel htmlFor="loadedDate">تاریخ و ساعت وزن با بار</FormLabel>
      <div className="flex gap-[6px] pt-[3px]">
        <DateField id="loadedDate" parts={["۱۳۹۰", "۰۶", "۰۸"]} />
        <input aria-label="ساعت وزن با بار" defaultValue="۱۷:۵۹" dir="ltr" className={clsx("-mt-px h-[16px] w-[27px] text-center outline-none", frame)} />
      </div>
      <span />
      <FormLabel htmlFor="gateIn">مرکز توزین درب ورود</FormLabel>
      <Field id="gateIn" value="توزین قراضه" disabled />

      <Radio id="empty" checked={mode === "empty"} onChange={setMode} />
      <FormLabel htmlFor="empty">وزن بدون بار</FormLabel>
      <Field id="emptyWeight" value="۰" disabled />
      <InboxButton gray />
      <FormLabel htmlFor="emptyDate">تاریخ و ساعت وزن بدون بار</FormLabel>
      <div className="flex gap-[6px] pt-[3px]">
        <DateField id="emptyDate" parts={["", "", ""]} disabled />
        <input aria-label="ساعت وزن بدون بار" defaultValue="__:__" disabled dir="ltr" className="-mt-px h-[16px] w-[27px] border border-[#86aadb] bg-[#ebe8d8] text-center text-[#a5a394]" />
      </div>
      <span />
      <FormLabel htmlFor="gateOut">مرکز توزین درب خروج</FormLabel>
      <Field id="gateOut" disabled />

      <span />
      <FormLabel htmlFor="net">وزن بار</FormLabel>
      <Field id="net" value="۱۳۰" disabled />
      <span />
      <FormLabel htmlFor="origin">وزن مبدا</FormLabel>
      <div className="pr-[19px]">
        <Field id="origin" value="۵۰۰" />
      </div>
      <span />
      <FormLabel htmlFor="shortage">کسري وزن</FormLabel>
      <Field id="shortage" value="۰" />

      <span />
      <FormLabel htmlFor="contract">قرارداد</FormLabel>
      <Combo id="contract" />
      <span />
      <FormLabel htmlFor="order">سفارش تامین</FormLabel>
      <div className="pr-[19px]">
        <Combo id="order" />
      </div>
      <span />
      <FormLabel htmlFor="supplier">تامین کننده</FormLabel>
      <Combo id="supplier" />

      <span />
      <FormLabel htmlFor="carrier">شرکت باربري</FormLabel>
      <Combo id="carrier" />
      <span />
      <FormLabel htmlFor="refNo">شماره ارجاع</FormLabel>
      <div className="pr-[19px]">
        <Field id="refNo" />
      </div>
      <span />
      <FormLabel htmlFor="destination">محل ارسال</FormLabel>
      <Combo id="destination" />

      <span />
      <FormLabel htmlFor="notes">توضیحات</FormLabel>
      <div className="col-span-7">
        <Field id="notes" />
      </div>
    </div>
  )
}

function Radio({ id, checked, onChange }: { id: string; checked: boolean; onChange: (id: string) => void }) {
  return (
    <input
      type="radio"
      id={id}
      name="mode"
      checked={checked}
      onChange={() => onChange(id)}
      className="mt-[4px] size-[10px] appearance-none rounded-full border border-[#4a6a9c] bg-[#f4f4f0] checked:bg-[radial-gradient(circle,#35a52e_0_2px,#f4f4f0_3px)]"
    />
  )
}

function InboxButton({ gray }: { gray?: boolean }) {
  return (
    <button
      type="button"
      disabled={gray}
      aria-label="دریافت وزن"
      className="mr-[5px] flex h-[20px] w-[21px] items-center justify-center rounded-[3px] border border-[#86aadb] bg-linear-to-b from-[#eff5fd] to-[#cbddf5]"
    >
      <InboxIcon gray={gray} className="size-[14px]" />
    </button>
  )
}

const columns = ["کالا", "مقدار فرعی", "واحد فرعی", "واحد اصلی", "مقدار"]
const items = [["قراضه ویژه", "۱۰", "کیلوگرم", "کیلوگرم", "۱۰"]]

function ItemsToolbar() {
  const sep = <span className="h-[12px] border-r border-[#9dbce4]" />
  return (
    <div className="flex h-[18px] shrink-0 items-center gap-[4px] bg-linear-to-b from-[#e3efff] to-[#b0cef9] px-[2px] text-[#3c64a8]">
      <span className="h-[11px] border-l-2 border-dotted border-[#5c86c4]" />
      <button type="button" aria-label="حذف" className="mr-[2px] text-[#474747]"><CrossIcon className="size-[11px]" /></button>
      <button type="button" aria-label="چاپ" className="mr-px flex items-center gap-[3px]">
        <PrinterIcon className="size-[12px]" />
        <Caret />
      </button>
      <button type="button" aria-label="پنجره"><Glyph name="window" /></button>
      {sep}
      <button type="button" aria-label="جمع" className="flex items-center gap-[3px]">
        <Glyph name="sum" />
        <Caret />
      </button>
      <button type="button" aria-label="بازخوانی"><Glyph name="refresh" /></button>
      <button type="button" className="flex items-center gap-[4px] whitespace-nowrap">
        <Glyph name="export" />
        ورود و خروج داده
        <Caret />
      </button>
      {sep}
      <button type="button" aria-label="سطرها" className="mr-[3px]"><Glyph name="rows" /></button>
      <button type="button" aria-label="درخت"><Glyph name="tree" /></button>
      {sep}
      <div className="mr-px flex gap-[7px]">
        <button type="button" aria-label="اولین"><ToolArrowIcon up bar /></button>
        <button type="button" aria-label="قبلی"><ToolArrowIcon up /></button>
        <button type="button" aria-label="بعدی"><ToolArrowIcon /></button>
        <button type="button" aria-label="آخرین"><ToolArrowIcon bar /></button>
        <button type="button" aria-label="یافتن"><BinocularsIcon className="size-[12px]" /></button>
      </div>
      <button type="button" aria-label="لایه ها" className="mr-auto flex items-center gap-[4px]">
        <StackIcon />
        <Caret />
      </button>
    </div>
  )
}

function ItemsGrid() {
  return (
    <div className="flex min-h-0 flex-1 flex-col border border-[#aca899] bg-white p-[3px]">
      <ItemsToolbar />
      <div className="flex min-h-0 flex-1 flex-col border border-t-2 border-[#6a97d8]">
        <div className="flex h-[25px] shrink-0 items-center bg-[#a4bddf] px-[2px]">
          <span className="h-[17px] rounded-[3px] bg-linear-to-b from-[#e3eefc] to-[#cbdef6] px-[6px] leading-[17px] whitespace-nowrap text-[#2c54a0]">
            براي گروهبندي ستون مورد نظر خود را در این بخش قرار دهید.
          </span>
        </div>
        <table className="w-full table-fixed border-collapse text-right">
          <thead>
            <tr className="h-[15px] bg-linear-to-b from-[#dbe8f8] to-[#b9d0ee] text-[#3c64a8]">
              {columns.map((col) => (
                <th key={col} className="border-r border-[#7ea6de] px-[4px] leading-[14px] font-normal">
                  {col}
                </th>
              ))}
            </tr>
          </thead>
          <tbody>
            <tr className="h-[16px] border-b-2 border-[#9dbfee]">
              {columns.map((col, i) => (
                <td key={col} className={clsx("border-l border-dotted border-l-[#a9c6ee]", i > 2 && "bg-[#f0f0ee]")} />
              ))}
            </tr>
            {items.map((row, r) => (
              <tr key={r} className="h-[15px]">
                {row.map((cell, i) => (
                  <td
                    key={i}
                    className={clsx("border-b border-l border-dotted border-[#a9c6ee] px-[4px] leading-[14px] text-black", i > 2 && "bg-[#f0f0ee]")}
                  >
                    {cell}
                  </td>
                ))}
              </tr>
            ))}
          </tbody>
        </table>
        <div className="mt-auto flex h-[13px] shrink-0 items-center bg-[#f3f3f1]">
          <span className="flex w-[13px] justify-center">
            <Caret className="-rotate-90 text-[#44556f]" />
          </span>
          <span className="flex h-[12px] w-[80%] items-center justify-center rounded-[2px] border border-[#7f8fa9] bg-linear-to-b from-[#e4ebf3] to-[#c3d0e0]">
            <span className="h-[6px] w-[5px] border-x border-[#7f8fa9]" />
          </span>
          <span className="mr-auto flex w-[13px] justify-center">
            <Caret className="rotate-90 text-[#333]" />
          </span>
        </div>
      </div>
    </div>
  )
}

function DocumentDialog() {
  return (
    <div
      role="dialog"
      aria-label="سند توزین"
      className="absolute top-0 right-[280px] bottom-[2px] left-[21px] flex flex-col rounded-t-[6px] border border-[#4f70a0] bg-[#bfdbff]"
    >
      <div className="flex h-[20px] shrink-0 items-center gap-[3px] rounded-t-[6px] bg-linear-to-b from-[#eaf2fd] via-[#cfe0fa] via-35% to-[#eaf4ff] pt-[4px] pr-[3px] pl-[8px] text-[9px] text-[#4a6da6]">
        <FormIcon className="h-[10px] w-[11px]" />
        <h2 className="whitespace-nowrap">توزین قراضه ویرایش اسناد توزین : سند توزین شماره ۱۳۹۰ / ۲۳۶۵۰</h2>
        <div className="mr-auto flex items-center gap-[12px] text-[#7d8797]">
          <button type="button" aria-label="کوچک کردن">
            <svg viewBox="0 0 8 8" className="size-[8px]"><path d="M1 6h6v1.500H1z" fill="currentColor" /></svg>
          </button>
          <button type="button" aria-label="بزرگ کردن">
            <svg viewBox="0 0 8 8" className="size-[8px]"><path d="M.5 1.500h7v5h-7zM.5 2.500h7" stroke="currentColor" fill="none" /></svg>
          </button>
          <button type="button" aria-label="بستن"><CrossIcon className="size-[8px]" /></button>
        </div>
      </div>

      <div role="tablist" className="flex h-[18px] shrink-0 items-end pr-[4px] text-[#3c64a8]">
        <button type="button" role="tab" aria-selected className="h-[16px] w-[33px] rounded-t-[3px] border border-b-0 border-[#9dbce4] bg-[#eef5ff]">
          فعالیت
        </button>
        <button type="button" role="tab" aria-selected={false} className="h-[16px] px-[9px] whitespace-nowrap">
          نحوه چینش
        </button>
      </div>

      <Ribbon />

      <div className="mx-[4px] mt-[4px] flex min-h-0 flex-1 flex-col border border-[#7ba2d8] bg-white pt-[15px] pr-[4px] pb-[8px] pl-[20px]">
        <div className="mb-[3px] grid shrink-0 grid-cols-[241fr_127px_107fr_213fr] items-start">
          <span />
          <LedDisplay />
          <span />
          <span className="pt-[5px] text-[#e0501a]">وزن : ۰</span>
        </div>
        <WeighingForm />
        <div className="grid min-h-0 flex-1 grid-cols-[16px_97fr_575fr]">
          <span />
          <span className="pt-[2px] text-[#3c64a8]">کالا توزین</span>
          <div className="flex min-h-0 min-w-0 flex-col">
            <div role="tablist" className="flex h-[15px] shrink-0 items-end text-[#26324a]">
              <button type="button" role="tab" aria-selected className="h-[15px] w-[66px] border-x border-t-2 border-[#aca899] border-t-[#f0a22b] bg-white leading-[13px] whitespace-nowrap">
                اقلام سند توزین
              </button>
              <button type="button" role="tab" aria-selected={false} className="h-[13px] w-[74px] border border-b-0 border-[#aca899] bg-[#f1f0ea] leading-[12px] whitespace-nowrap">
                اقلام سند لجستیک
              </button>
            </div>
            <ItemsGrid />
          </div>
        </div>
      </div>

      <div dir="ltr" className="flex h-[18px] shrink-0 items-center px-[7px]">
        {["card", "props", "lock", "clip", "inbox", "mail", "check", "grid", "page"].map((name, i) => (
          <button
            key={name}
            type="button"
            aria-label={name}
            className={clsx("flex h-[17px] w-[18px] items-center justify-center", i === 0 && "rounded-b-[3px] border border-t-0 border-[#7ba2d8] bg-[#e3eefc]")}
          >
            {name === "inbox" ? <InboxIcon className="size-[13px]" /> : name === "grid" ? <CalendarGridIcon /> : <Glyph name={name} />}
          </button>
        ))}
      </div>
      <div className="h-[3px] shrink-0 border-t border-[#5f8fd6] bg-[#8fb6ec]" />
    </div>
  )
}

export default function App() {
  return (
    <div
      dir="rtl"
      className="relative flex h-screen flex-col overflow-hidden bg-[#bfdbff] font-['DejaVu_Sans',sans-serif] text-[8px] leading-[12px]"
    >
      <TopBars />
      <main className="flex min-h-0 flex-1 gap-[4px] border-b-2 border-[#5f8fd6] bg-[#7da7df] px-[4px] pt-px pb-px">
        <SidePanel />
        <DocumentList />
      </main>
      <footer className="flex h-[18px] shrink-0 items-center justify-end bg-linear-to-b from-[#dceafd] to-[#aacdfb] px-[4px] text-[#3c64a8]">
        <span dir="ltr" className="text-[10px]">12:23</span>
      </footer>
      <DocumentDialog />
    </div>
  )
}
